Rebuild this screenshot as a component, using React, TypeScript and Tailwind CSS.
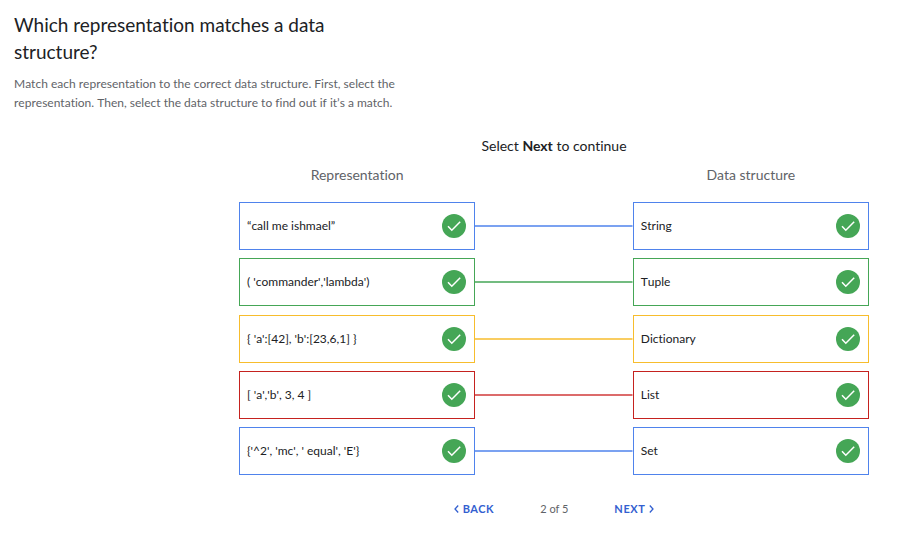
type Pair = {
  representation: string;
  structure: string;
  border: string;
  line: string;
};

const pairs: Pair[] = [
  { representation: '“call me ishmael”', structure: 'String', border: 'border-[#4f83ec]', line: '#4f83ec' },
  { representation: "( 'commander','lambda')", structure: 'Tuple', border: 'border-[#45a656]', line: '#45a656' },
  { representation: "{ 'a':[42], 'b':[23,6,1] }", structure: 'Dictionary', border: 'border-[#f7bd2d]', line: '#f7bd2d' },
  { representation: "[ 'a','b', 3, 4 ]", structure: 'List', border: 'border-[#c5221f]', line: '#d03a3a' },
  { representation: "{'^2', 'mc', ' equal', 'E'}", structure: 'Set', border: 'border-[#4f83ec]', line: '#4f83ec' },
];

function CheckBadge() {
  return (
    <svg className="size-6 shrink-0" viewBox="0 0 24 24" aria-hidden="true">
      <circle cx="12" cy="12" r="12" fill="#45a656" />
      <path d="M6 12.2 L9.8 16.2 L18.2 7.8" fill="none" stroke="#fff" strokeWidth="1.5" />
    </svg>
  );
}

function Choice({ label, border }: { label: string; border: string }) {
  return (
    <button
      type="button"
      className={`col-span-3 flex h-12 items-center justify-between border bg-white pr-2 pl-[7px] text-left text-xs text-[#202124] [font-kerning:none] ${border}`}
    >
      <span className="whitespace-nowrap">{label}</span>
      <CheckBadge />
    </button>
  );
}

function Connector({ color }: { color: string }) {
  return (
    <svg className="col-span-2 h-12 w-full" aria-hidden="true">
      <line x1="0" x2="100%" y1="24" y2="24" stroke={color} strokeWidth="1.7" />
    </svg>
  );
}

function Chevron({ d }: { d: string }) {
  return (
    <svg className="h-2 w-[5px]" viewBox="0 0 5 8" aria-hidden="true">
      <path d={d} fill="none" stroke="currentColor" strokeWidth="1.3" />
    </svg>
  );
}

export default function App() {
  return (
    <main className="min-h-screen bg-white font-['Lato','Open_Sans',sans-serif] text-[#202124] [font-variant-ligatures:none]">
      <header className="max-w-[430px] pt-[11px] pl-[14px]">
        <h1 className="max-w-[340px] text-[19px] leading-[27px]">Which representation matches a data structure?</h1>
        <p className="mt-[9px] text-xs leading-[19px] text-[#5f6368] [font-kerning:none]">
          Match each representation to the correct data structure. First, select the representation. Then, select the
          data structure to find out if it’s a match.
        </p>
      </header>
      <section className="mt-6 mr-8 ml-[239px]">
        <p className="text-center text-sm leading-5">
          Select <strong>Next</strong> to continue
        </p>
        <div className="mt-[9px] grid grid-cols-8 text-center text-sm leading-5 text-[#5f6368]">
          <h2 className="col-span-3">Representation</h2>
          <h2 className="col-span-3 col-start-6">Data structure</h2>
        </div>
        <div className="mt-[17px] flex min-h-[273px] flex-col justify-between">
          {pairs.map((pair) => (
            <div key={pair.structure} className="grid grid-cols-8">
              <Choice label={pair.representation} border={pair.border} />
              <Connector color={pair.line} />
              <Choice label={pair.structure} border={pair.border} />
            </div>
          ))}
        </div>
        <nav className="mt-[26px] flex items-center justify-center gap-[46px] text-[11px] leading-4">
          <button type="button" className="flex items-center gap-1 font-bold tracking-wider text-[#3360d0]">
            <Chevron d="M4.2 0.5 L1 4 L4.2 7.5" />
            BACK
          </button>
          <span className="text-[#5f6368]">2 of 5</span>
          <button type="button" className="flex items-center gap-1 font-bold tracking-wider text-[#3360d0]">
            NEXT
            <Chevron d="M0.8 0.5 L4 4 L0.8 7.5" />
          </button>
        </nav>
      </section>
    </main>
  );
}
